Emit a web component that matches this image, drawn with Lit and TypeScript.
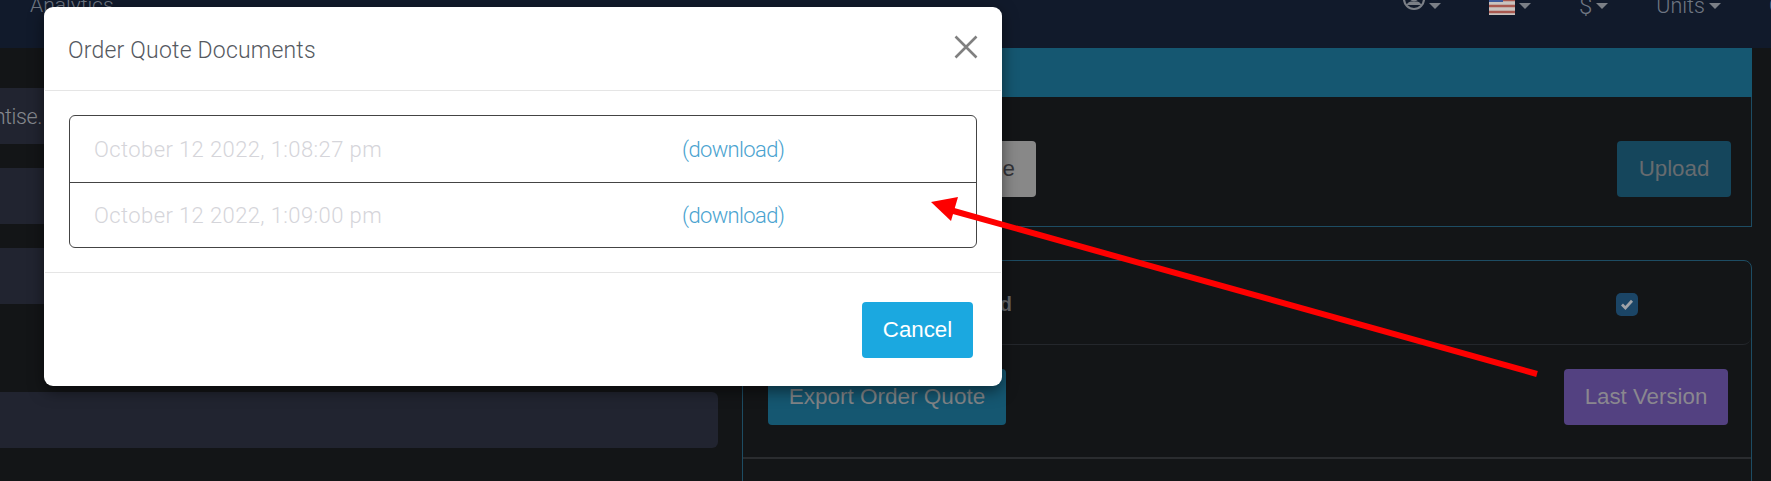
import { LitElement, html, css } from "lit";
import { customElement } from "lit/decorators.js";

@customElement("app-root")
export class AppRoot extends LitElement {
  static styles = css`
    :host { display: block; position: relative; width: 1771px; height: 481px; overflow: hidden; background: #131517; font-family: "Liberation Sans", Arial, sans-serif; }
    .light { font-family: Roboto, "Liberation Sans", sans-serif; font-weight: 300; }
    .nav { height: 48px; background: #111a2b; overflow: hidden; display: grid; grid-template-columns: 1403px 1fr; }
    .nav-left { padding-left: 30px; margin-top: -8px; font-size: 21px; line-height: 26px; color: #6f7682; }
    .nav-right { display: flex; gap: 48px; margin-top: -7px; height: 26px; align-items: center; color: #6f7682; font-size: 21.5px; line-height: 26px; white-space: nowrap; }
    .nav-item { display: flex; align-items: center; gap: 4px; }
    .caret { width: 0; height: 0; margin-top: -1px; border-left: 6.5px solid transparent; border-right: 6.5px solid transparent; border-top: 6px solid #7b7f86; }
    .avatar { display: block; width: 22px; height: 38px; margin-top: -10px; }
    .flag { display: block; width: 26px; height: 30px; margin-top: -12px; }
    .dollar { font-size: 24px; }
    .content { display: grid; grid-template-columns: 718px 1010px; column-gap: 24px; }
    .left { padding-top: 40px; margin-left: -12px; display: flex; flex-direction: column; gap: 24px; }
    .field { height: 56px; background: #212430; border-radius: 6px; padding-left: 12px; }
    .field-text { display: flex; align-items: center; width: 42px; height: 56px; justify-content: flex-end; white-space: nowrap; color: #85888e; font-size: 21.5px; letter-spacing: -0.4px; }
    .field-wide { margin-top: 64px; }
    .panel-head { height: 49px; background: #155771; }
    .panel-body { height: 130px; box-sizing: border-box; border: 1px solid #1d4c63; border-top: 0; display: flex; justify-content: space-between; padding: 44px 20px 0 141px; }
    .btn { height: 56px; border-radius: 4px; display: flex; align-items: center; justify-content: center; font-size: 22.3px; white-space: nowrap; }
    .btn-file { width: 152px; background: #888888; color: #333338; justify-content: flex-end; padding-right: 21px; box-sizing: border-box; }
    .btn-upload { width: 114px; background: #15465c; color: #666b6f; }
    .panel2 { margin-top: 33px; height: 231px; border: 1px solid #1d4c63; border-radius: 8px 8px 0 0; box-sizing: border-box; }
    .check-row { height: 80px; padding-top: 3px; border-bottom: 1px solid #24272c; border-radius: 0 0 8px 8px; display: grid; grid-template-columns: 269px 22px; column-gap: 604px; align-items: center; }
    .check-label { font-weight: 700; font-size: 20px; color: #666769; text-align: right; white-space: nowrap; }
    .checkbox { width: 22px; height: 23px; border-radius: 5px; background: #1b4566; display: flex; align-items: center; justify-content: center; }
    .check-icon { width: 14px; height: 14px; display: block; }
    .actions { display: flex; justify-content: space-between; padding: 24px 23px 0 25px; height: 56px; }
    .btn-export { width: 238px; background: #155771; color: #808487; font-size: 22.5px; }
    .btn-last { width: 164px; background: #534181; color: #8a878f; }
    .rule { margin-top: 32px; height: 2px; background: #2a2c2f; }
    .modal { position: absolute; left: 44px; top: 7px; width: 958px; height: 379px; background: #fff; border-radius: 9px; box-shadow: 0 5px 15px rgba(0,0,0,.5); display: flex; flex-direction: column; }
    .modal-head { height: 84px; box-sizing: border-box; border-bottom: 1px solid #e5e5e5; margin: 0 1px; padding: 0 23px 0 23px; display: flex; align-items: center; justify-content: space-between; }
    .title { font-size: 23px; letter-spacing: 0.2px; color: #55595f; padding-top: 3px; }
    .close { display: block; width: 24px; height: 24px; margin-top: -3px; }
    .modal-body { padding: 24px 25px 24px; }
    .list { border: 1px solid #444; border-radius: 6px; }
    .row { height: 66px; display: grid; grid-template-columns: 588px 1fr; align-items: center; padding-left: 24px; font-size: 22px; }
    .row + .row { border-top: 1px solid #444; height: 64px; }
    .date { color: #d5d5da; letter-spacing: 0.4px; }
    .link { color: #4aa3d0; letter-spacing: -0.65px; }
    .modal-foot { flex: 1; border-top: 1px solid #e5e5e5; margin: 0 1px; display: flex; justify-content: flex-end; padding: 29px 28px 0 0; }
    .btn-cancel { width: 111px; background: #1ba8e0; color: #fff; }
    .arrow { position: absolute; left: 0; top: 0; width: 1771px; height: 481px; pointer-events: none; }
  `;

  render() {
    return html`
      <div class="nav">
        <div class="nav-left light">Analytics</div>
        <div class="nav-right light">
          <div class="nav-item">
            <svg class="avatar" viewBox="0 0 22 38" fill="none" stroke="#7b7f86" stroke-width="2.2">
              <circle cx="11" cy="17" r="10" />
              <circle cx="11" cy="14" r="5.5" fill="#7b7f86" stroke="none" />
              <path d="M3.5 23c2-4 5-3.5 7.5-3.5s5.500-.5 7.500 3.500" fill="#7b7f86" stroke="none" />
            </svg>
            <span class="caret"></span>
          </div>
          <div class="nav-item">
            <svg class="flag" viewBox="0 0 26 30">
              <rect width="26" height="30" fill="#c9c3bf" />
              <path d="M0 3h26M0 9h26M0 15h26M0 21h26M0 27h26" stroke="#a8584f" stroke-width="2.4" />
              <rect width="14" height="17" fill="#3d5a9c" />
            </svg>
            <span class="caret"></span>
          </div>
          <div class="nav-item"><span class="dollar">$</span><span class="caret"></span></div>
          <div class="nav-item"><span>Units</span><span class="caret"></span></div>
          <div class="nav-item"><span>C</span></div>
        </div>
      </div>

      <div class="content">
        <div class="left">
          <div class="field"><div class="field-text light"><span>Apprentise.</span></div></div>
          <div class="field"></div>
          <div class="field"></div>
          <div class="field field-wide"></div>
        </div>
        <div class="right">
          <div class="panel-head"></div>
          <div class="panel-body">
            <div class="btn btn-file">Choose File</div>
            <div class="btn btn-upload">Upload</div>
          </div>
          <div class="panel2">
            <div class="check-row">
              <div class="check-label">Approved</div>
              <div class="checkbox">
                <svg class="check-icon" viewBox="0 0 14 14" fill="none" stroke="#a0a3a8" stroke-width="2.8"><path d="M2 7.5l3.4 3.4L12 3.8" /></svg>
              </div>
            </div>
            <div class="actions">
              <div class="btn btn-export">Export Order Quote</div>
              <div class="btn btn-last">Last Version</div>
            </div>
            <div class="rule"></div>
          </div>
        </div>
      </div>

      <div class="modal">
        <div class="modal-head">
          <div class="title light">Order Quote Documents</div>
          <svg class="close" viewBox="0 0 24 24" fill="none" stroke="#808080" stroke-width="2.6"><path d="M1.500 1.500l21 21M22.500 1.500l-21 21" /></svg>
        </div>
        <div class="modal-body">
          <div class="list light">
            <div class="row"><span class="date">October 12 2022, 1:08:27 pm</span><span class="link">(download)</span></div>
            <div class="row"><span class="date">October 12 2022, 1:09:00 pm</span><span class="link">(download)</span></div>
          </div>
        </div>
        <div class="modal-foot"><div class="btn btn-cancel">Cancel</div></div>
      </div>

      <svg class="arrow" viewBox="0 0 1771 481">
        <path d="M1537 374L950 210" stroke="#fe0000" stroke-width="6" fill="none" />
        <path d="M931 202L958 197L951 221Z" fill="#fe0000" />
      </svg>
    `;
  }
}
